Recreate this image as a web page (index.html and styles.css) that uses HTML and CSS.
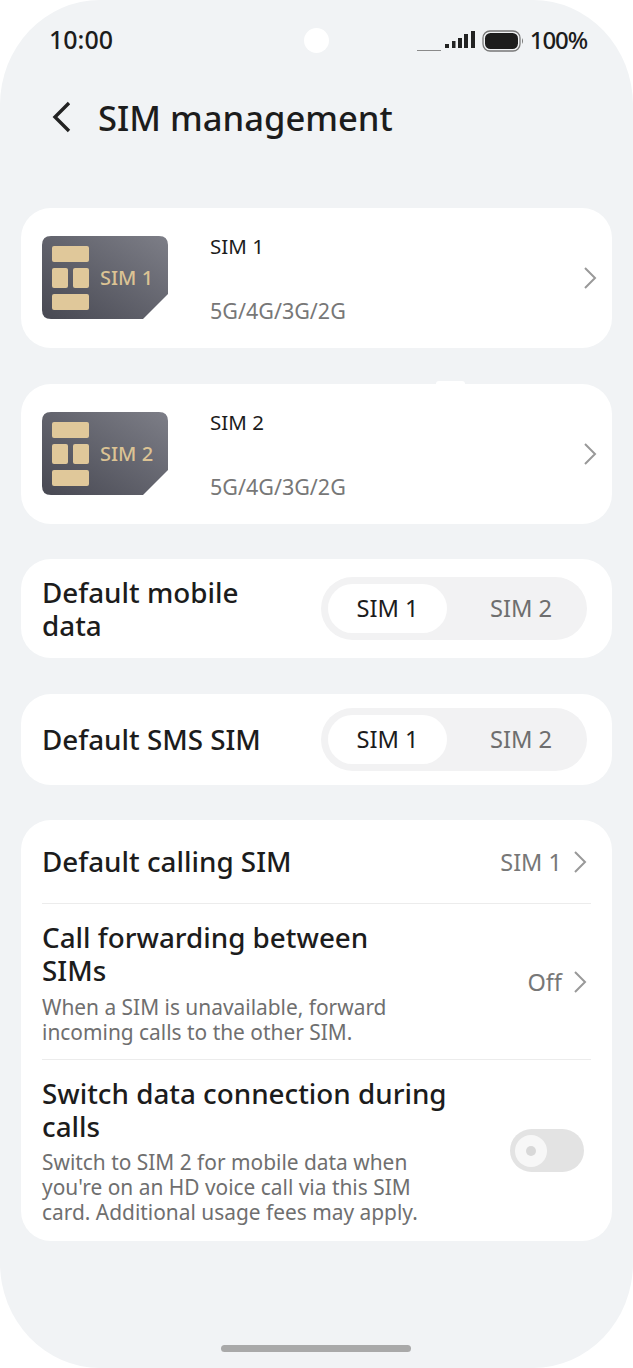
FILE: index.html
```html
<!DOCTYPE html>
<html lang="en">

<head>
    <meta charset="UTF-8">
    <meta name="viewport" content="width=device-width, initial-scale=1.0">
    <title>SIM management</title>
    <link rel="stylesheet" href="styles.css">
</head>

<body>
    <div class="screen">
        <!-- status bar -->
        <div class="status-bar">
            <span class="clock">10:00</span>
            <span class="camera"></span>
            <div class="status-icons">
                <svg class="signal" width="58" height="24" viewBox="0 0 58 24">
                    <rect x="0" y="21" width="24" height="1" fill="#8a8a8a"/>
                    <rect x="28" y="15" width="4" height="4" fill="#222"/>
                    <rect x="35" y="12" width="3.5" height="7" fill="#222"/>
                    <rect x="41" y="9" width="4" height="10" fill="#222"/>
                    <rect x="47" y="5" width="4" height="14" fill="#222"/>
                    <rect x="54" y="2" width="4" height="17" fill="#222"/>
                </svg>
                <svg class="battery" width="42" height="22" viewBox="0 0 42 22">
                    <rect x="1" y="1" width="37" height="20" rx="7" fill="none" stroke="#777" stroke-width="1.3"/>
                    <rect x="3" y="3" width="33" height="16" rx="5.5" fill="#1d1d1d"/>
                    <path d="M40 8 Q42 11 40 14 Z" fill="#777"/>
                </svg>
                <span class="percent">100%</span>
            </div>
        </div>

        <!-- title -->
        <div class="title-bar">
            <svg class="back" width="20" height="32" viewBox="0 0 20 32">
                <path d="M18 2 L4 16 L18 30" fill="none" stroke="#222" stroke-width="3.4"/>
            </svg>
            <h1>SIM management</h1>
        </div>

        <div class="content">
            <div class="card sim-card">
                <svg class="sim-pic" width="128" height="86" viewBox="0 0 128 86">
                    <defs>
                        <linearGradient id="simBg1" x1="1" y1="0" x2="0" y2="1">
                            <stop offset="0" stop-color="#7d7e87"/>
                            <stop offset="1" stop-color="#474852"/>
                        </linearGradient>
                    </defs>
                    <path d="M10 1 H118 Q127 1 127 10 V59 L102 84 H10 Q1 84 1 75 V10 Q1 1 10 1 Z" fill="url(#simBg1)"/>
                    <rect x="11" y="11" width="37" height="16" rx="2" fill="#e0c89a"/>
                    <rect x="11" y="33" width="16" height="20" rx="2" fill="#e0c89a"/>
                    <rect x="32" y="33" width="16" height="20" rx="2" fill="#e0c89a"/>
                    <rect x="11" y="59" width="37" height="16" rx="2" fill="#e0c89a"/>
                    <text x="59" y="50" class="sim-label">SIM 1</text>
                </svg>
                <div class="sim-info">
                    <div class="sim-name">SIM 1</div>
                    <div class="sim-net">5G/4G/3G/2G</div>
                </div>
                <svg class="chevron" width="14" height="24" viewBox="0 0 14 24">
                    <path d="M2 2 L12 12 L2 22" fill="none" stroke="#999" stroke-width="2"/>
                </svg>
            </div>

            <div class="card sim-card second">
                <span class="notch"></span>
                <svg class="sim-pic" width="128" height="86" viewBox="0 0 128 86">
                    <path d="M10 1 H118 Q127 1 127 10 V59 L102 84 H10 Q1 84 1 75 V10 Q1 1 10 1 Z" fill="url(#simBg1)"/>
                    <rect x="11" y="11" width="37" height="16" rx="2" fill="#e0c89a"/>
                    <rect x="11" y="33" width="16" height="20" rx="2" fill="#e0c89a"/>
                    <rect x="32" y="33" width="16" height="20" rx="2" fill="#e0c89a"/>
                    <rect x="11" y="59" width="37" height="16" rx="2" fill="#e0c89a"/>
                    <text x="59" y="50" class="sim-label">SIM 2</text>
                </svg>
                <div class="sim-info">
                    <div class="sim-name">SIM 2</div>
                    <div class="sim-net">5G/4G/3G/2G</div>
                </div>
                <svg class="chevron" width="14" height="24" viewBox="0 0 14 24">
                    <path d="M2 2 L12 12 L2 22" fill="none" stroke="#999" stroke-width="2"/>
                </svg>
            </div>

            <div class="card pick-card mobile-data">
                <div class="row-title pick-title">Default mobile data</div>
                <div class="segment">
                    <span class="seg on">SIM 1</span>
                    <span class="seg">SIM 2</span>
                </div>
            </div>

            <div class="card pick-card sms">
                <div class="row-title pick-title">Default SMS SIM</div>
                <div class="segment">
                    <span class="seg on">SIM 1</span>
                    <span class="seg">SIM 2</span>
                </div>
            </div>

            <div class="card list-card">
                <div class="row row-calling">
                    <div class="row-text"><div class="row-title">Default calling SIM</div></div>
                    <span class="row-value">SIM 1</span>
                    <svg class="chevron small" width="14" height="24" viewBox="0 0 14 24">
                        <path d="M2 2 L12 12 L2 22" fill="none" stroke="#999" stroke-width="2"/>
                    </svg>
                </div>
                <div class="row row-forward">
                    <div class="row-text">
                        <div class="row-title">Call forwarding between SIMs</div>
                        <div class="row-desc">When a SIM is unavailable, forward incoming calls to the other SIM.</div>
                    </div>
                    <span class="row-value">Off</span>
                    <svg class="chevron small" width="14" height="24" viewBox="0 0 14 24">
                        <path d="M2 2 L12 12 L2 22" fill="none" stroke="#999" stroke-width="2"/>
                    </svg>
                </div>
                <div class="row row-switch">
                    <div class="row-text">
                        <div class="row-title">Switch data connection during calls</div>
                        <div class="row-desc">Switch to SIM 2 for mobile data when you're on an HD voice call via this SIM card. Additional usage fees may apply.</div>
                    </div>
                    <div class="toggle"><span class="knob"></span></div>
                </div>
            </div>
        </div>

        <div class="home-bar"></div>
    </div>
</body>

</html>
```

FILE: styles.css
```css
body,
html {
    margin: 0;
    padding: 0;
    background: #fff;
    font-family: "Noto Sans", Arial, sans-serif;
}

.screen {
    width: 633px;
    height: 1368px;
    box-sizing: border-box;
    background: #f1f3f5;
    border-radius: 100px / 105px;
    display: flex;
    flex-direction: column;
    overflow: hidden;
}

/* status bar */
.status-bar {
    display: grid;
    grid-template-columns: 1fr 25px 1fr;
    align-items: center;
    height: 25px;
    padding: 28px 46px 0 46px;
}

.clock,
.percent {
    font-weight: 500;
    color: #1c1c1c;
    line-height: 23px;
    align-self: start;
}

.clock {
    padding-left: 3px;
    font-size: 25px;
}

.camera {
    width: 25px;
    height: 25px;
    border-radius: 50%;
    background: #fff;
}

.status-icons {
    display: flex;
    justify-content: flex-end;
    align-items: center;
    gap: 7px;
}

.percent {
    font-size: 24px;
    line-height: 21px;
    letter-spacing: -1.1px;
}

.battery {
    margin-right: -1px;
}

/* title */
.title-bar {
    display: flex;
    align-items: center;
    height: 50px;
    margin-top: 39px;
    padding-left: 51px;
}

.back {
    margin-right: 27px;
}

h1 {
    margin: 0;
    font-size: 34.6px;
    font-weight: 500;
    color: #1c1c1c;
}

/* cards */
.content {
    display: flex;
    flex-direction: column;
    gap: 35px;
    margin-top: 66px;
    padding: 0 21px;
}

.card {
    background: #fff;
    border-radius: 30px;
    position: relative;
}

.sim-card {
    display: flex;
    align-items: center;
    height: 140px;
    padding: 0 15px 0 20px;
    box-sizing: border-box;
}

.second {
    margin-top: 1px;
}

.notch {
    position: absolute;
    top: -3px;
    left: 415px;
    width: 29px;
    height: 3px;
    background: #fff;
    border-radius: 3px 3px 0 0;
}

.sim-label {
    font-family: "Noto Sans", Arial, sans-serif;
    font-size: 20px;
    font-weight: 500;
    fill: #dcc394;
}

.sim-pic {
    flex-shrink: 0;
}

.sim-info {
    flex: 1;
    margin-left: 41px;
    height: 93px;
    display: flex;
    flex-direction: column;
    justify-content: space-between;
}

.sim-name {
    font-size: 20.5px;
    color: #1c1c1c;
    line-height: 28px;
}

.sim-net {
    font-size: 21.5px;
    color: #777;
    line-height: 28px;
}

.chevron {
    flex-shrink: 0;
}

/* default sim pickers */
.pick-card {
    display: flex;
    align-items: center;
    justify-content: space-between;
    padding: 0 25px 0 21px;
}

.mobile-data {
    height: 99px;
}

.sms {
    height: 91px;
    margin-top: 1px;
}

.pick-title {
    width: 240px;
}

.segment {
    display: flex;
    width: 266px;
    height: 63px;
    box-sizing: border-box;
    padding: 7px;
    border-radius: 32px;
    background: #f2f2f3;
}

.seg {
    flex: 1;
    display: flex;
    align-items: center;
    justify-content: center;
    padding-left: 15px;
    font-size: 23.7px;
    line-height: 47px;
    color: #6e6e6e;
    border-radius: 25px;
}

.seg.on {
    flex: 0 0 119px;
    padding-left: 0;
    background: #fff;
    color: #1c1c1c;
}

/* list card */
.list-card {
    padding: 0 21px;
}

.row {
    display: flex;
    align-items: center;
    border-bottom: 1px solid #ececec;
}

.row:last-child {
    border-bottom: 0;
}

.row-calling {
    height: 83px;
}

.row-forward {
    height: 153px;
    padding-top: 2px;
}

.row-switch {
    height: 181px;
}

.row-text {
    flex: 1;
}

.row-title {
    font-size: 27.8px;
    line-height: 33px;
    font-weight: 500;
    color: #1c1c1c;
}

.row-forward .row-title {
    width: 380px;
}

.row-switch .row-title {
    width: 430px;
}

.row-desc {
    width: 390px;
    margin-top: 7px;
    font-size: 20.9px;
    line-height: 25px;
    color: #6f6f6f;
}

.row-forward .row-desc {
    margin-top: 8px;
}

.row-value {
    font-size: 23.5px;
    color: #777;
    margin-right: 11px;
}

.row-forward .row-value,
.row-forward .chevron {
    margin-top: -2px;
}

.small {
    margin-right: 4px;
}

/* toggle */
.toggle {
    width: 74px;
    height: 43px;
    margin-right: 7px;
    border-radius: 22px;
    background: #e3e3e3;
    display: flex;
    align-items: center;
    padding-left: 5px;
    box-sizing: border-box;
}

.knob {
    width: 32px;
    height: 32px;
    border-radius: 50%;
    background: #f7f7f7;
    display: flex;
    align-items: center;
    justify-content: center;
}

.knob::after {
    content: "";
    width: 10px;
    height: 10px;
    border-radius: 50%;
    background: #d8d8d8;
}

/* home indicator */
.home-bar {
    width: 190px;
    height: 7px;
    border-radius: 4px;
    background: #a9a9a9;
    margin: auto auto 16px 221px;
}
```
